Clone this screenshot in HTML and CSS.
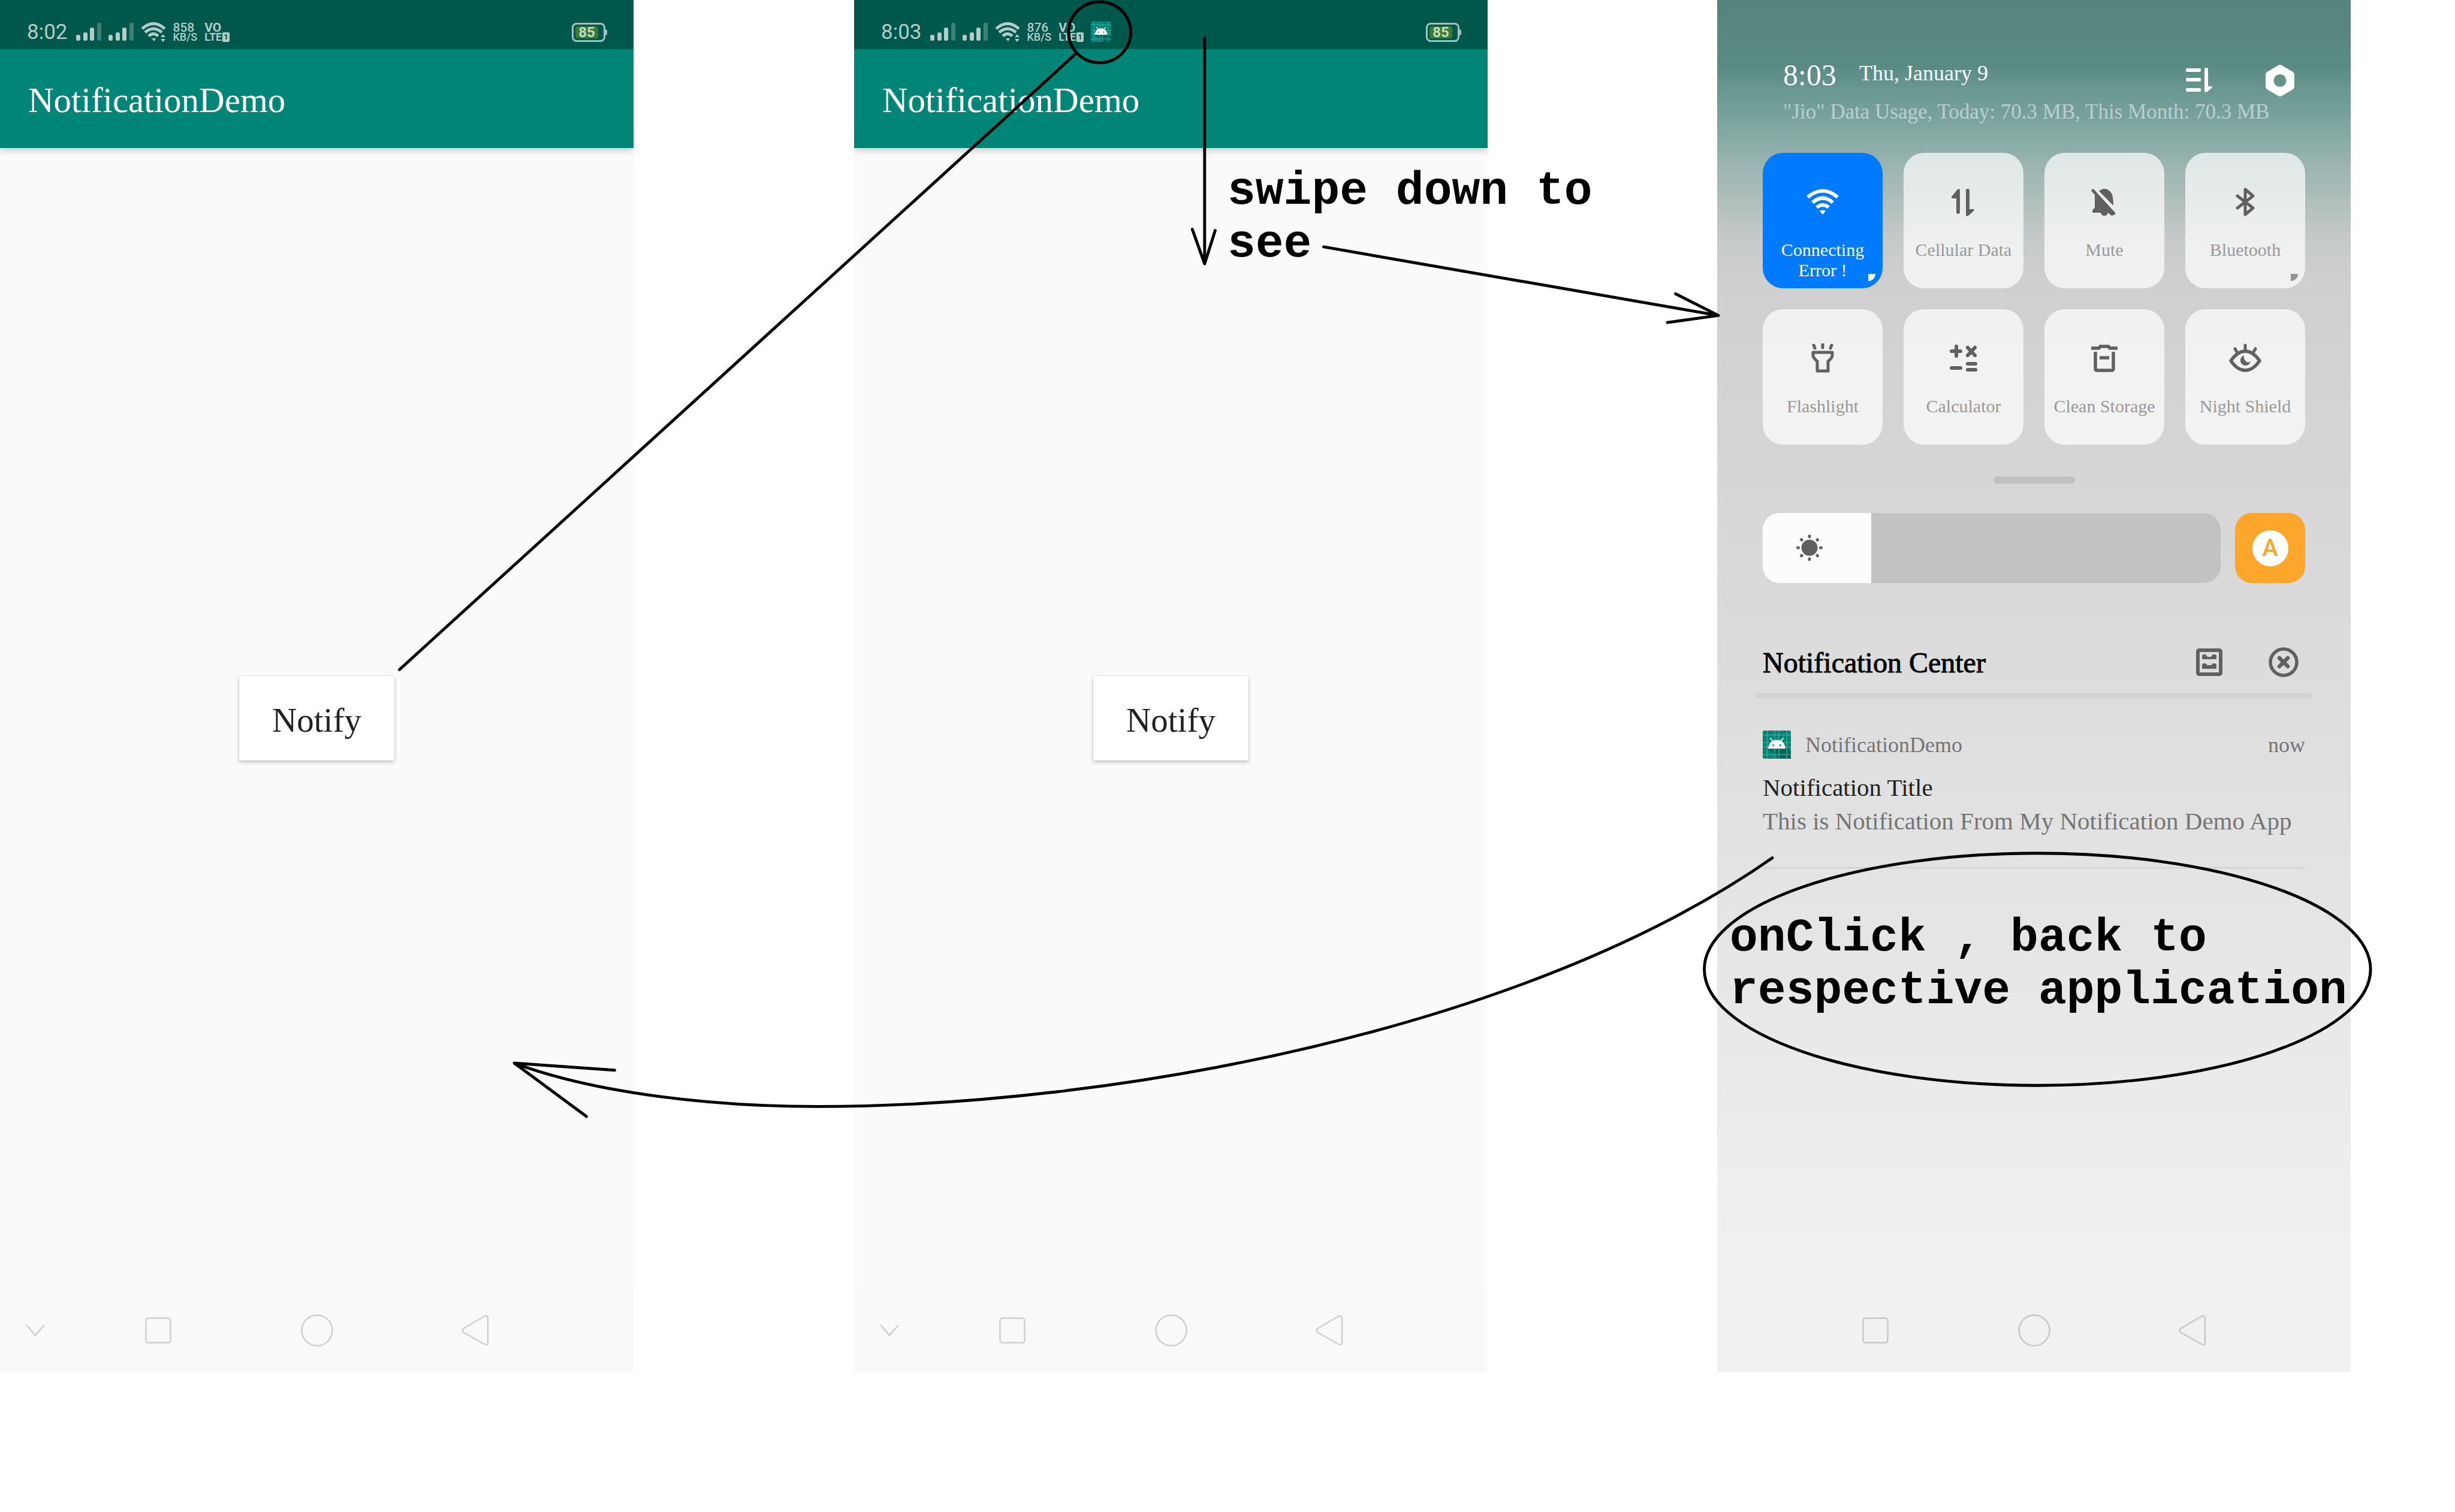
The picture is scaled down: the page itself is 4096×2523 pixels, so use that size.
FILE: index.html
```html
<!DOCTYPE html>
<html lang="en">
<head>
<meta charset="utf-8">
<title>NotificationDemo</title>
<link rel="stylesheet" href="styles.css">
</head>
<body>
<svg class="defs" aria-hidden="true">
  <symbol id="signal" viewBox="0 0 42 32">
    <rect x="0" y="20" width="7" height="10" rx="3"/><rect x="12" y="16" width="7" height="14" rx="3"/><rect x="23" y="8" width="7" height="22" rx="3"/><rect x="35" y="0" width="7" height="30" rx="3" opacity=".35"/>
  </symbol>
  <symbol id="wifi-data" viewBox="0 0 42 33">
    <g fill="none" stroke="currentColor" stroke-width="5"><path d="M2 11Q21 -6 40 11"/><path d="M7 17Q21 5 35 17"/><path d="M13 23Q21 16 29 23"/></g>
    <path d="M18 27h7l-3 5zM33 25l4-5 4 5zM33 28h8l-4 5z"/>
  </symbol>
  <symbol id="app" viewBox="0 0 48 48">
    <rect width="48" height="48" rx="3" fill="#008577"/>
    <path d="M9 31L28 48H48V36L38 26z" fill="#00695e"/>
    <path d="M0 7.500H48M0 20.500H48M0 28H48M0 41H48M7.500 0V48M20.500 0V48M27.500 0V48M41 0V48" stroke="#5fb3a8" stroke-width="1" fill="none"/>
    <path d="M9 31Q10 22 16 18L12 13l1-1 5 5q6-2 12 0l5-5 1 1-4 5q6 4 7 13z" fill="#fff"/>
    <circle cx="18" cy="25" r="1.500" fill="#008577"/><circle cx="30" cy="25" r="1.500" fill="#008577"/>
  </symbol>
  <symbol id="chevron" viewBox="0 0 32 20"><path d="M1 1L16 18L31 1" fill="none" stroke="currentColor" stroke-width="2.500"/></symbol>
  <symbol id="square" viewBox="0 0 44 44"><rect x="1.500" y="1.500" width="41" height="41" rx="4" fill="none" stroke="currentColor" stroke-width="2.500"/></symbol>
  <symbol id="circle" viewBox="0 0 54 54"><circle cx="27" cy="27" r="25.500" fill="none" stroke="currentColor" stroke-width="2.500"/></symbol>
  <symbol id="back" viewBox="0 0 46 52"><path d="M3 23L38 2.500Q44 0 44 6V46Q44 52 38 49L3 29Q0 26 3 23z" fill="none" stroke="currentColor" stroke-width="2.500"/></symbol>
</svg>

<main class="board">
  <section class="phone">
    <div class="status">
      <span class="clock">8:02</span>
      <svg class="signal"><use href="#signal"/></svg>
      <svg class="signal"><use href="#signal"/></svg>
      <svg class="wifi"><use href="#wifi-data"/></svg>
      <span class="speed"><span>858</span><span class="unit">KB/S</span></span>
      <span class="volte"><span>VO</span><span class="unit">LTE<i class="sim">1</i></span></span>
      <span class="battery"><span>85</span></span>
    </div>
    <header class="appbar"><h1>NotificationDemo</h1></header>
    <div class="content"><button class="notify">Notify</button></div>
    <nav class="nav">
      <button aria-label="Hide"><svg class="i-chevron"><use href="#chevron"/></svg></button>
      <button aria-label="Recents"><svg class="i-square"><use href="#square"/></svg></button>
      <button aria-label="Home"><svg class="i-circle"><use href="#circle"/></svg></button>
      <button aria-label="Back"><svg class="i-back"><use href="#back"/></svg></button>
    </nav>
  </section>

  <section class="phone second">
    <div class="status">
      <span class="clock">8:03</span>
      <svg class="signal"><use href="#signal"/></svg>
      <svg class="signal"><use href="#signal"/></svg>
      <svg class="wifi"><use href="#wifi-data"/></svg>
      <span class="speed"><span>876</span><span class="unit">KB/S</span></span>
      <span class="volte"><span>VO</span><span class="unit">LTE<i class="sim">1</i></span></span>
      <svg class="status-app"><use href="#app"/></svg>
      <span class="battery"><span>85</span></span>
    </div>
    <header class="appbar"><h1>NotificationDemo</h1></header>
    <div class="content"><button class="notify">Notify</button></div>
    <nav class="nav">
      <button aria-label="Hide"><svg class="i-chevron"><use href="#chevron"/></svg></button>
      <button aria-label="Recents"><svg class="i-square"><use href="#square"/></svg></button>
      <button aria-label="Home"><svg class="i-circle"><use href="#circle"/></svg></button>
      <button aria-label="Back"><svg class="i-back"><use href="#back"/></svg></button>
    </nav>
  </section>

  <section class="phone third">
    <div class="shade">
      <header class="shade-head">
        <div class="head-row">
          <span class="time">8:03</span>
          <span class="date">Thu, January 9</span>
          <span class="head-icons">
            <button aria-label="Sort tiles"><svg width="44" height="53" viewBox="0 0 44 53" fill="#fff"><rect x="0" y="6" width="25" height="6" rx="2"/><rect x="0" y="22" width="25" height="6" rx="2"/><rect x="0" y="39" width="25" height="6" rx="2"/><path d="M31 8q0-3 3-3t3 3V36h6q2 1 0 3l-7 6q-5 2-5-2z"/></svg></button>
            <button aria-label="Settings"><svg width="48" height="53" viewBox="0 0 48 53" fill="#fff"><path fill-rule="evenodd" d="M20 1.500Q24-1 28 1.500L44 11Q48 13 48 17V36Q48 40 44 42L28 51.500Q24 54 20 51.500L4 42Q0 40 0 36V17Q0 13 4 11zM24 16a10.500 10.500 0 1 0 0 21a10.500 10.500 0 1 0 0-21z"/></svg></button>
          </span>
        </div>
        <p class="usage">"Jio" Data Usage, Today: 70.3 MB, This Month: 70.3 MB</p>
      </header>

      <div class="tiles">
        <button class="tile on more"><svg viewBox="0 0 54 50"><g fill="none" stroke="currentColor" stroke-width="6"><path d="M2 17Q27-4 52 17"/><path d="M10 26Q27 11 44 26"/><path d="M17 34Q27 26 37 34"/></g><path d="M22 40q5-3 10 0l-5 6z"/></svg><span>Connecting<br>Error !</span></button>
        <button class="tile"><svg viewBox="0 0 54 50"><path d="M18 45q-3 0-3-3V19H9q-4-1-1-4l9-11q4-2 4 2V42q0 3-3 3zM34 3q3 0 3 3v31h6q3 0 1 3L35 48q-4 2-4-2V6q0-3 3-3z"/></svg><span>Cellular Data</span></button>
        <button class="tile"><svg viewBox="0 0 54 50"><path d="M11 13L43 44q-1 4-4 4l-6-5q-1 5-6 5t-6-5H8q-3-5 3-8z"/><path d="M18 7q9-8 18 0 6 4 6 24z"/><path d="M8 6l35 38" stroke="currentColor" stroke-width="5" stroke-linecap="round"/><path d="M14 6l33 36" stroke="#e9edec" stroke-width="4"/></svg><span>Mute</span></button>
        <button class="tile more"><svg viewBox="0 0 54 50"><path d="M14 15L40 35L27 46V4L40 15L14 35" fill="none" stroke="currentColor" stroke-width="5" stroke-linejoin="round" stroke-linecap="round"/></svg><span>Bluetooth</span></button>
        <button class="tile"><svg viewBox="0 0 54 50"><path d="M11 15H43V20Q43 24 36 30V46H18V30Q11 24 11 20z" fill="none" stroke="currentColor" stroke-width="5" stroke-linejoin="round"/><path d="M12 3l2 5M27 1v6M42 3l-2 5" stroke="currentColor" stroke-width="5" stroke-linecap="round"/></svg><span>Flashlight</span></button>
        <button class="tile"><svg viewBox="0 0 54 50"><g fill="none" stroke="currentColor" stroke-width="6" stroke-linecap="round"><path d="M7 13H22M15 5V21M34 7L46 20M46 7L34 20M7 41H22M34 34H47M34 44H47"/></g></svg><span>Calculator</span></button>
        <button class="tile"><svg viewBox="0 0 54 50"><g fill="none" stroke="currentColor" stroke-width="5.500"><path d="M5 8H18L20 5H34L36 8H49" stroke-linejoin="round"/><path d="M12 14V42Q12 45 15 45H39Q42 45 42 42V14"/><path d="M19 24H35"/></g></svg><span>Clean Storage</span></button>
        <button class="tile"><svg viewBox="0 0 54 50"><path d="M3 29Q14 13 27 13T51 29Q40 45 27 45T3 29z" fill="none" stroke="currentColor" stroke-width="5.500" stroke-linejoin="round"/><path d="M25 20q-7 3-6 10 2 7 9 7 6 0 8-7-4 3-8 0-4-4-3-10z"/><path d="M10 9l3 5M27 3v8M44 9l-3 5" stroke="currentColor" stroke-width="5" stroke-linecap="round"/></svg><span>Night Shield</span></button>
      </div>

      <div class="handle"></div>

      <div class="brightness">
        <label class="slider">
          <input type="range" min="0" max="100" value="24" aria-label="Brightness">
          <svg class="sun" viewBox="0 0 44 44"><circle cx="22" cy="22" r="13.500"/><path d="M22 2.500v1M22 40.500v1M2.500 22h1M40.500 22h1M8.500 8.500l.6.6M34.900 34.900l.6.6M8.500 35.500l.6-.6M34.900 9.100l.6-.6" stroke="currentColor" stroke-width="5" stroke-linecap="round"/></svg>
        </label>
        <button class="auto" aria-label="Automatic brightness"><span>A</span></button>
      </div>

      <header class="center-head">
        <h2>Notification Center</h2>
        <button aria-label="Manage"><svg width="44" height="50" viewBox="0 0 44 50"><rect x="3" y="5" width="38" height="40" rx="2" fill="none" stroke="currentColor" stroke-width="6"/><path d="M10 15q0-3 3-3h3l3 4h6l3-4h3q3 0 3 3v5H10zM10 30q0-3 3-3h3l3 3h6l3-3h3q3 0 3 3v6H10z"/></svg></button>
        <button aria-label="Clear all"><svg width="50" height="50" viewBox="0 0 50 50"><g fill="none" stroke="currentColor" stroke-width="5.500"><circle cx="25" cy="25" r="22"/><path d="M18 18L32 32M32 18L18 32" stroke-width="6.500" stroke-linecap="round"/></g></svg></button>
      </header>
      <div class="divider"></div>

      <article class="note">
        <div class="note-app"><svg><use href="#app"/></svg><span>NotificationDemo</span><time>now</time></div>
        <h3>Notification Title</h3>
        <p>This is Notification From My Notification Demo App</p>
      </article>
    </div>
    <nav class="nav">
      <span></span>
      <button aria-label="Recents"><svg class="i-square"><use href="#square"/></svg></button>
      <button aria-label="Home"><svg class="i-circle"><use href="#circle"/></svg></button>
      <button aria-label="Back"><svg class="i-back"><use href="#back"/></svg></button>
    </nav>
  </section>

  <svg class="marks" viewBox="0 0 4186 2578" aria-hidden="true">
    <path d="M681 1142L1835 91"/>
    <ellipse cx="1875" cy="55" rx="53" ry="52"/>
    <path d="M2054 65V450M2033 391L2054 450L2072 393"/>
    <path d="M2257 421L2930 538M2857 501L2930 538L2843 550"/>
    <path d="M3022 1463C2602 1757 1894 1887 1394 1887C1220 1887 1020 1866 877 1813M1048 1825L877 1813L1000 1904"/>
    <ellipse cx="3474" cy="1653" rx="568" ry="198"/>
  </svg>
  <p class="label swipe">swipe down to<br>see</p>
  <p class="label click">onClick , back to<br>respective application</p>
</main>
</body>
</html>
```
FILE: styles.css
```css
* { box-sizing: border-box; }
body { margin: 0; background: #fff; font-family: "Liberation Serif", serif; }
h1, h2, h3, p { margin: 0; font-weight: 400; }
button { border: 0; padding: 0; background: none; color: inherit; font-family: inherit; }
svg { display: block; fill: currentColor; flex: none; }
.defs { position: absolute; width: 0; height: 0; }

.board {
  position: relative;
  display: grid;
  grid-template-columns: 1057fr 368fr 1057fr 383fr 1057fr 174fr;
  align-items: start;
  overflow: hidden;
}
.phone {
  grid-column: 1;
  min-width: 0;
  aspect-ratio: 1080 / 2340;
  display: flex;
  flex-direction: column;
  background: #fafafa;
}
.second { grid-column: 3; }
.third {
  grid-column: 5;
  background: linear-gradient(#56847d 0, #5a8b83 110px, #6f9b95 165px, #82a8a2 220px, #9cb5b1 280px, #b2bfbd 340px, #c5c9c9 395px, #cecece 450px, #d0d0d0 500px, #d8d8d8 900px, #e3e3e3 1450px, #ebebeb 1830px, #f2f2f2 2200px);
}

/* Status bar */
.status {
  display: flex;
  align-items: flex-end;
  gap: 12px;
  height: 82px;
  padding: 0 44px 12px 45px;
  background: #00574b;
  color: #b2cdc9;
  font-family: Roboto, sans-serif;
}
.clock { font-size: 35px; line-height: 32px; margin-right: 2px; }
.signal { width: 42px; height: 32px; }
.wifi { width: 42px; height: 33px; }
.speed, .volte { display: flex; flex-direction: column; font-size: 21px; line-height: 16px; font-weight: 500; }
.volte { font-weight: 700; }
.unit { display: flex; gap: 1px; font-size: 18px; }
.sim { padding: 0 2px; background: #b2cdc9; color: #00574b; font-size: 13px; font-style: normal; border-radius: 2px; }
.status-app { width: 34px; height: 34px; }
.battery {
  position: relative;
  width: 56px;
  height: 32px;
  margin: 0 3px 0 auto;
  padding: 3px;
  border: 3px solid #a3c2be;
  border-radius: 8px;
  font-size: 24px;
  line-height: 20px;
  font-weight: 700;
  text-align: center;
  color: #c3d8c0;
}
.battery span { display: block; width: 38px; background: #3c7a37; border-radius: 4px; }
.battery::after { content: ""; position: absolute; right: -6px; top: 8px; width: 3px; height: 10px; border-radius: 0 3px 3px 0; background: #a3c2be; }

.appbar {
  display: flex;
  align-items: center;
  height: 165px;
  padding: 5px 47px 0;
  background: #008577;
  color: #fff;
  box-shadow: 0 4px 12px rgba(0, 0, 0, .2);
  clip-path: inset(0 0 -20px 0);
}
.appbar h1 { font-size: 59px; line-height: 68px; }

.content { flex: 1; display: grid; place-items: center; }
.notify {
  width: 259px;
  height: 141px;
  padding-top: 6px;
  background: #fff;
  color: #212121;
  font-size: 57px;
  box-shadow: 0 3px 6px rgba(0, 0, 0, .22), 0 0 2px rgba(0, 0, 0, .15);
}

.nav {
  display: grid;
  grid-template-columns: 1fr 2fr 2fr 2fr 1fr;
  align-items: center;
  justify-items: center;
  height: 141px;
  background: rgba(0, 0, 0, .005);
  color: #cfcfcf;
}
.nav button:first-child { justify-self: end; margin-right: 57px; }
.third .nav { color: #c8c8c8; }
.i-chevron { width: 32px; height: 20px; }
.i-square { width: 44px; height: 44px; }
.i-circle { width: 54px; height: 54px; }
.i-back { width: 46px; height: 52px; }

/* Notification shade */
.shade { flex: 1; padding: 97px 76px 0; color: #606060; }
.shade-head { margin: 0 18px 46px 34px; color: #fff; }
.head-row { display: flex; align-items: flex-start; height: 64px; margin-bottom: 4px; }
.time { width: 127px; font-size: 50px; line-height: 56px; }
.date { font-size: 36px; line-height: 50px; }
.head-icons { display: flex; gap: 89px; margin-left: auto; padding-top: 11px; }
.usage { font-size: 35px; line-height: 44px; color: rgba(255, 255, 255, .5); white-space: nowrap; }

.tiles { display: grid; grid-template-columns: repeat(4, 1fr); gap: 35px; }
.tile {
  position: relative;
  display: flex;
  flex-direction: column;
  align-items: center;
  gap: 38px;
  height: 226px;
  padding-top: 57px;
  border-radius: 34px;
  background: rgba(255, 255, 255, .7);
  font-size: 30px;
  line-height: 34px;
}
.tile svg { width: 54px; height: 50px; }
.tile span { color: #999; }
.on, .on span { color: #fff; }
.on { background: #007aff; }
.more::after { content: ""; position: absolute; right: 12px; bottom: 12px; width: 12px; height: 12px; background: #939393; border-radius: 0 0 12px 0; }
.on::after { background: #fff; }

.handle { width: 136px; height: 12px; margin: 53px auto 49px; border-radius: 6px; background: #c0c0c0; }

.brightness { display: flex; gap: 24px; height: 117px; }
.slider { position: relative; flex: 1; }
.slider input {
  appearance: none;
  display: block;
  width: 100%;
  height: 100%;
  margin: 0;
  border-radius: 28px;
  background: linear-gradient(90deg, #fcfcfc 181px, #c2c2c2 181px);
}
.slider input::-webkit-slider-thumb { appearance: none; width: 1px; height: 117px; background: transparent; }
.sun { position: absolute; left: 56px; top: 36px; width: 44px; height: 44px; }
.auto { display: grid; place-items: center; width: 117px; border-radius: 28px; background: #fca62c; }
.auto span { width: 60px; height: 60px; border-radius: 50%; background: #fff; color: #fca62c; font: 500 40px/60px Roboto, sans-serif; }

.center-head { display: flex; align-items: center; height: 60px; margin: 102px 11px 21px 0; }
.center-head h2 { margin-right: auto; font-size: 48px; color: #000; -webkit-text-stroke: 1px #000; }
.center-head button + button { margin-left: 77px; }
.divider { height: 9px; margin: 0 -12px 54px; background: #d2d2d2; }

.note { padding-bottom: 49px; border-bottom: 2px solid #cfcfcf; color: #757575; }
.note-app { display: flex; align-items: center; gap: 24px; height: 47px; margin-bottom: 20px; font-size: 36px; }
.note-app svg { width: 47px; height: 47px; }
.note-app time { margin-left: auto; }
.note h3, .note p { font-size: 41px; line-height: 56px; white-space: nowrap; }
.note h3 { color: #212121; }

/* Hand-drawn annotations over the screens */
.marks { position: absolute; inset: 0; width: 100%; height: auto; overflow: visible; fill: none; stroke: #000; stroke-width: 5; stroke-linecap: round; stroke-linejoin: round; pointer-events: none; }
.label { position: absolute; font: 700 78px/88px "Liberation Mono", monospace; color: #000; white-space: pre; }
.swipe { left: 50%; top: 275px; }
.click { left: 70.460%; top: 1521px; }
```
